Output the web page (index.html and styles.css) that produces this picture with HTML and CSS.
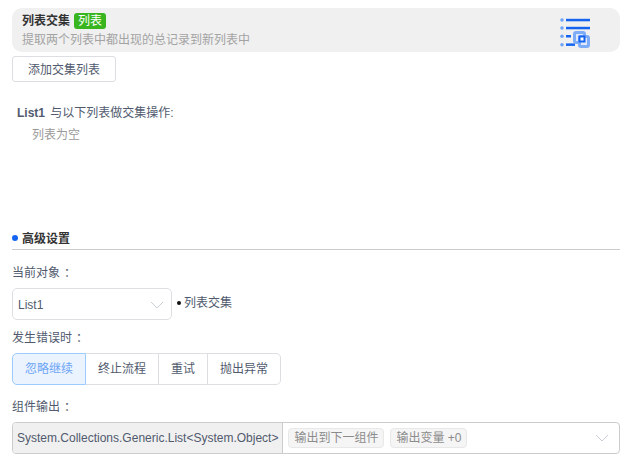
FILE: index.html
```html
<!DOCTYPE html>
<html lang="zh">
<head>
<meta charset="utf-8">
<title>列表交集</title>
<link rel="stylesheet" href="styles.css">
</head>
<body>
<div class="page">
  <header class="card">
    <div class="card-text">
      <div class="card-title"><span>列表交集</span><span class="tag">列表</span></div>
      <div class="card-desc">提取两个列表中都出现的总记录到新列表中</div>
    </div>
    <svg class="card-icon" width="30" height="32" viewBox="0 0 30 32">
      <g fill="#6fa3f7">
        <circle cx="2" cy="4" r="1.8"/><circle cx="2" cy="12" r="1.8"/><circle cx="2" cy="20.3" r="1.8"/><circle cx="2" cy="28.7" r="1.8"/>
      </g>
      <g fill="#1464f0">
        <rect x="6" y="2.8" width="24" height="2.5"/><rect x="6" y="10.8" width="24" height="2.5"/><rect x="6" y="19" width="5" height="2.5"/><rect x="6" y="27.4" width="9" height="2.5"/>
      </g>
      <rect x="14.5" y="16.5" width="10" height="10" rx="1.5" fill="#dfe9fb" stroke="#7eacf7" stroke-width="3"/>
      <rect x="19.5" y="20.5" width="9" height="10" rx="1.5" fill="#dfe9fb" stroke="#7eacf7" stroke-width="3"/>
      <rect x="18.5" y="19.5" width="7" height="7" fill="#1464f0"/>
      <rect x="20.5" y="21.5" width="3" height="3" fill="#fff"/>
    </svg>
  </header>
  <button class="add-btn">添加交集列表</button>
  <section class="list-section">
    <div class="list-head"><b class="list-name">List1</b> 与以下列表做交集操作:</div>
    <div class="list-empty">列表为空</div>
  </section>
  <section class="advanced">
    <h2 class="adv-title"><i class="dot"></i>高级设置</h2>
    <div class="label label-object">当前对象<span class="colon">：</span></div>
    <div class="object-row">
      <div class="select">
        <span>List1</span>
        <svg class="chev" width="14" height="8" viewBox="0 0 14 8"><path d="M1 1l6 6 6-6" fill="none" stroke="#c9ced8" stroke-width="1"/></svg>
      </div>
      <i class="mini-dot"></i><span class="object-name">列表交集</span>
    </div>
    <div class="label label-error">发生错误时<span class="colon">：</span></div>
    <div class="segments">
      <span class="seg active">忽略继续</span><span class="seg">终止流程</span><span class="seg">重试</span><span class="seg">抛出异常</span>
    </div>
    <div class="label label-output">组件输出<span class="colon">：</span></div>
    <div class="output">
      <span class="output-type">System.Collections.Generic.List&lt;System.Object&gt;</span>
      <div class="output-tags">
        <span class="pill">输出到下一组件</span><span class="pill">输出变量 +0</span>
      </div>
      <svg class="chev" width="14" height="8" viewBox="0 0 14 8"><path d="M1 1l6 6 6-6" fill="none" stroke="#c9ced8" stroke-width="1"/></svg>
    </div>
  </section>
</div>
</body>
</html>
```

FILE: styles.css
```css
* { box-sizing: border-box; }
html, body { margin: 0; padding: 0; background: #fff; }
body {
  font-family: "Liberation Sans", "Noto Sans CJK SC", sans-serif;
  font-size: 12px;
  color: #515a6e;
  width: 630px;
  height: 472px;
  overflow: hidden;
}
.page { padding: 8px 10px 0 12px; }
.card {
  height: 44px;
  background: #f0f0f0;
  border-radius: 10px;
  display: flex;
  align-items: center;
  justify-content: space-between;
  padding: 0 30px 0 10px;
}
.card-title { display: flex; align-items: center; gap: 4px; font-weight: 700; color: #333; line-height: 16px; height: 16px; margin-top: 1px; }
.tag {
  background: #39b520;
  color: #fff;
  font-weight: 400;
  border-radius: 3px;
  padding: 0 4px;
  line-height: 16px;
}
.card-desc { color: #a3a3a3; line-height: 16px; margin-top: 3px; }
.card-icon { display: block; margin-top: 4px; }
.add-btn {
  display: block;
  margin-top: 4px;
  width: 104px;
  height: 26px;
  background: #fff;
  border: 1px solid #dcdee2;
  border-radius: 3px;
  font: inherit;
  color: #515a6e;
  padding: 0 0 2px;
}
.list-section { padding: 23px 5px 0; }
.list-head { line-height: 16px; color: #515a6e; height: 16px; }
.list-name { color: #515a6e; margin-right: 2px; }
.list-empty { margin-top: 6px; padding-left: 15px; color: #9a9a9a; line-height: 16px; }
.advanced { margin-top: 83px; }
.adv-title {
  margin: 0;
  font-size: 12px;
  font-weight: 700;
  color: #333;
  display: flex;
  align-items: center;
  gap: 4px;
  height: 24px;
  border-bottom: 1px solid #ccc;
}
.dot { width: 6px; height: 6px; border-radius: 50%; background: #1464f0; }
.label { line-height: 16px; color: #515a6e; }
.label-object { margin-top: 15px; }
.label-error { margin-top: 10px; }
.label-output { margin-top: 14px; }
.colon { margin-left: 4px; }
.object-row { display: flex; align-items: center; margin-top: 7px; }
.select {
  width: 160px;
  height: 32px;
  border: 1px solid #dcdee2;
  border-radius: 5px;
  display: flex;
  align-items: center;
  justify-content: space-between;
  padding: 2px 7px 0 5px;
}
.mini-dot { width: 4px; height: 4px; border-radius: 50%; background: #111; margin: 0 3px 0 5px; position: relative; top: -1px; }
.object-name { color: #515a6e; margin-top: -6px; }
.segments { display: inline-flex; margin-top: 7px; vertical-align: top; }
.seg {
  height: 32px;
  line-height: 30px;
  padding: 0 12px;
  border: 1px solid #dcdee2;
  border-left: 0;
  background: #fff;
}
.seg:first-child { border-left: 1px solid #9ccbff; border-radius: 5px 0 0 5px; }
.seg:last-child { border-radius: 0 5px 5px 0; }
.seg.active { background: #ebf3ff; color: #6ea6f5; border-color: #9ccbff; border-right: 1px solid #9ccbff; }
.output {
  margin-top: 7px;
  height: 32px;
  border: 1px solid #ccc;
  border-radius: 4px;
  display: flex;
  align-items: center;
}
.output-type {
  background: #f0f0f0;
  height: 100%;
  line-height: 30px;
  padding: 0 4px;
  border-right: 1px solid #ccc;
  border-radius: 3px 0 0 3px;
  white-space: nowrap;
}
.output-tags { flex: 1; display: flex; gap: 6px; padding-left: 5px; }
.pill {
  background: #f5f5f5;
  border: 1px solid #e8e8e8;
  border-radius: 4px;
  color: #8c8c8c;
  height: 20px;
  line-height: 18px;
  padding: 0 5px;
}
.output .chev { margin-right: 10px; }
```
